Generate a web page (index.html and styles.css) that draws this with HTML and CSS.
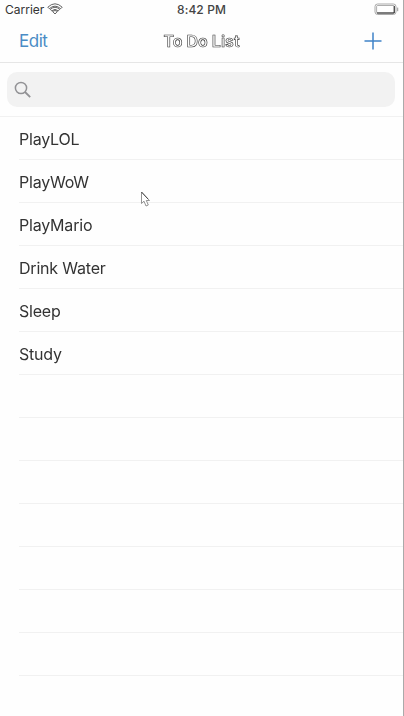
FILE: index.html
```html
<!DOCTYPE html>
<html lang="en">
<head>
<meta charset="utf-8">
<title>To Do List</title>
<link rel="stylesheet" href="styles.css">
</head>
<body>
<div class="screen">
  <header class="top">
    <div class="status">
      <div class="carrier"><span class="carrier-name">Carrier</span>
        <svg class="wifi" width="16" height="12" viewBox="0 0 16 12" fill="none" stroke="#333" stroke-width=".75"><path d="M.8 4.2Q8-2.6 15.2 4.2L13.7 5.7Q8 .6 2.3 5.7ZM3.3 6.4Q8 2.2 12.7 6.4L11.3 7.8Q8 4.9 4.7 7.8ZM5.6 8.5Q8 6.4 10.4 8.5L8 11Z"/></svg>
      </div>
      <div class="time"><span class="time-text">8:42 PM</span></div>
      <div class="power">
        <svg width="25" height="13" viewBox="0 0 25 13" fill="none"><rect x="1" y="1" width="21" height="10.5" rx="2.6" stroke="#aaa"/><rect x="2.6" y="2.5" width="17.8" height="7.5" rx="1" fill="#fff" stroke="#777" stroke-width=".6"/><path d="M3 10H20.2V3" stroke="#222"/><path d="M23.6 4.6V8.2" stroke="#aaa" stroke-width="1.3"/></svg>
      </div>
    </div>
    <nav class="nav">
      <div class="edit"><span class="edit-text">Edit</span></div>
      <h1 class="title"><span class="title-text">To Do List</span></h1>
      <div class="add">
        <svg width="18" height="18" viewBox="0 0 18 18" fill="none" stroke="#3f83c8" stroke-width="1.5"><path d="M9 .5V17.5M.5 9H17.5"/></svg>
      </div>
    </nav>
  </header>
  <div class="search">
    <div class="field">
      <svg width="18" height="18" viewBox="0 0 18 18" fill="none" stroke="#929295" stroke-width="1.5"><circle cx="7" cy="7" r="5.6"/><path d="M11 11L16.2 16.2" stroke-width="1.8"/></svg>
    </div>
  </div>
  <ul class="list">
    <li class="row"><span>PlayLOL</span></li>
    <li class="row"><span>PlayWoW</span></li>
    <li class="row"><span>PlayMario</span></li>
    <li class="row"><span>Drink Water</span></li>
    <li class="row"><span>Sleep</span></li>
    <li class="row"><span>Study</span></li>
    <li class="row"></li>
    <li class="row"></li>
    <li class="row"></li>
    <li class="row"></li>
    <li class="row"></li>
    <li class="row"></li>
    <li class="row"></li>
  </ul>
  <svg class="cursor" width="11" height="17" viewBox="0 0 11 17" fill="#fff" stroke="#777" stroke-width=".8"><path d="M1.5 1V12.5L4 10.2L6 15L8.3 14L6.3 9.5H9.5Z"/><path d="M1.5 1L8 8" stroke="#333"/></svg>
</div>
</body>
</html>
```
FILE: styles.css
```css
* { box-sizing: border-box; }
body {
  margin: 0;
  background: #fefefe;
  font-family: Inter, "Liberation Sans", sans-serif;
  color: #222;
}
.screen {
  position: relative;
  height: 716px;
  overflow: hidden;
  border-right: 1px solid #aaa;
}
.top { height: 63px; border-bottom: 1px solid #e6e6e6; }
.status {
  display: grid;
  grid-template-columns: 1fr 1fr 1fr;
  height: 20px;
  align-items: center;
  font-size: 12px;
}
.carrier { display: flex; align-items: center; gap: 4px; padding-left: 5px; }
.wifi { margin-top: -3px; margin-left: -1px; }
.carrier-name { color: #333; margin-top: -1px; }
.time { text-align: center; font-weight: 500; letter-spacing: .1px; margin-top: -1px; color: #444; }
.power { display: flex; justify-content: flex-end; padding-right: 4px; margin-top: -1px; }
.nav {
  display: grid;
  grid-template-columns: 1fr 1fr 1fr;
  align-items: center;
  height: 42px;
  font-size: 17px;
}
.edit { padding-left: 19px; color: #4a8cc5; font-size: 17px; letter-spacing: -.5px; }
.title {
  margin: 0;
  font-size: 16px;
  font-weight: 600;
  text-align: center;
  white-space: nowrap;
  color: #fff;
  -webkit-text-stroke: .6px #333;
  filter: grayscale(1);
}
.add { display: flex; justify-content: flex-end; padding-right: 21px; }
.search {
  height: 54px;
  padding: 9px 8px 9px 7px;
  border-bottom: 1px solid #f1f1f1;
}
.field {
  display: flex;
  align-items: center;
  height: 35px;
  padding-left: 7px;
  border-radius: 10px;
  background: #f2f2f2;
}
.list { margin: 0 0 0 19px; padding: 0; list-style: none; }
.row {
  display: flex;
  align-items: center;
  height: 43px;
  padding-top: 2px;
  border-bottom: 1px solid #f1f1f1;
  font-size: 16px;
  line-height: 20px;
  letter-spacing: -.2px;
}
.row span { color: #333; filter: grayscale(1); }
.cursor { position: absolute; left: 140px; top: 191px; }
```
